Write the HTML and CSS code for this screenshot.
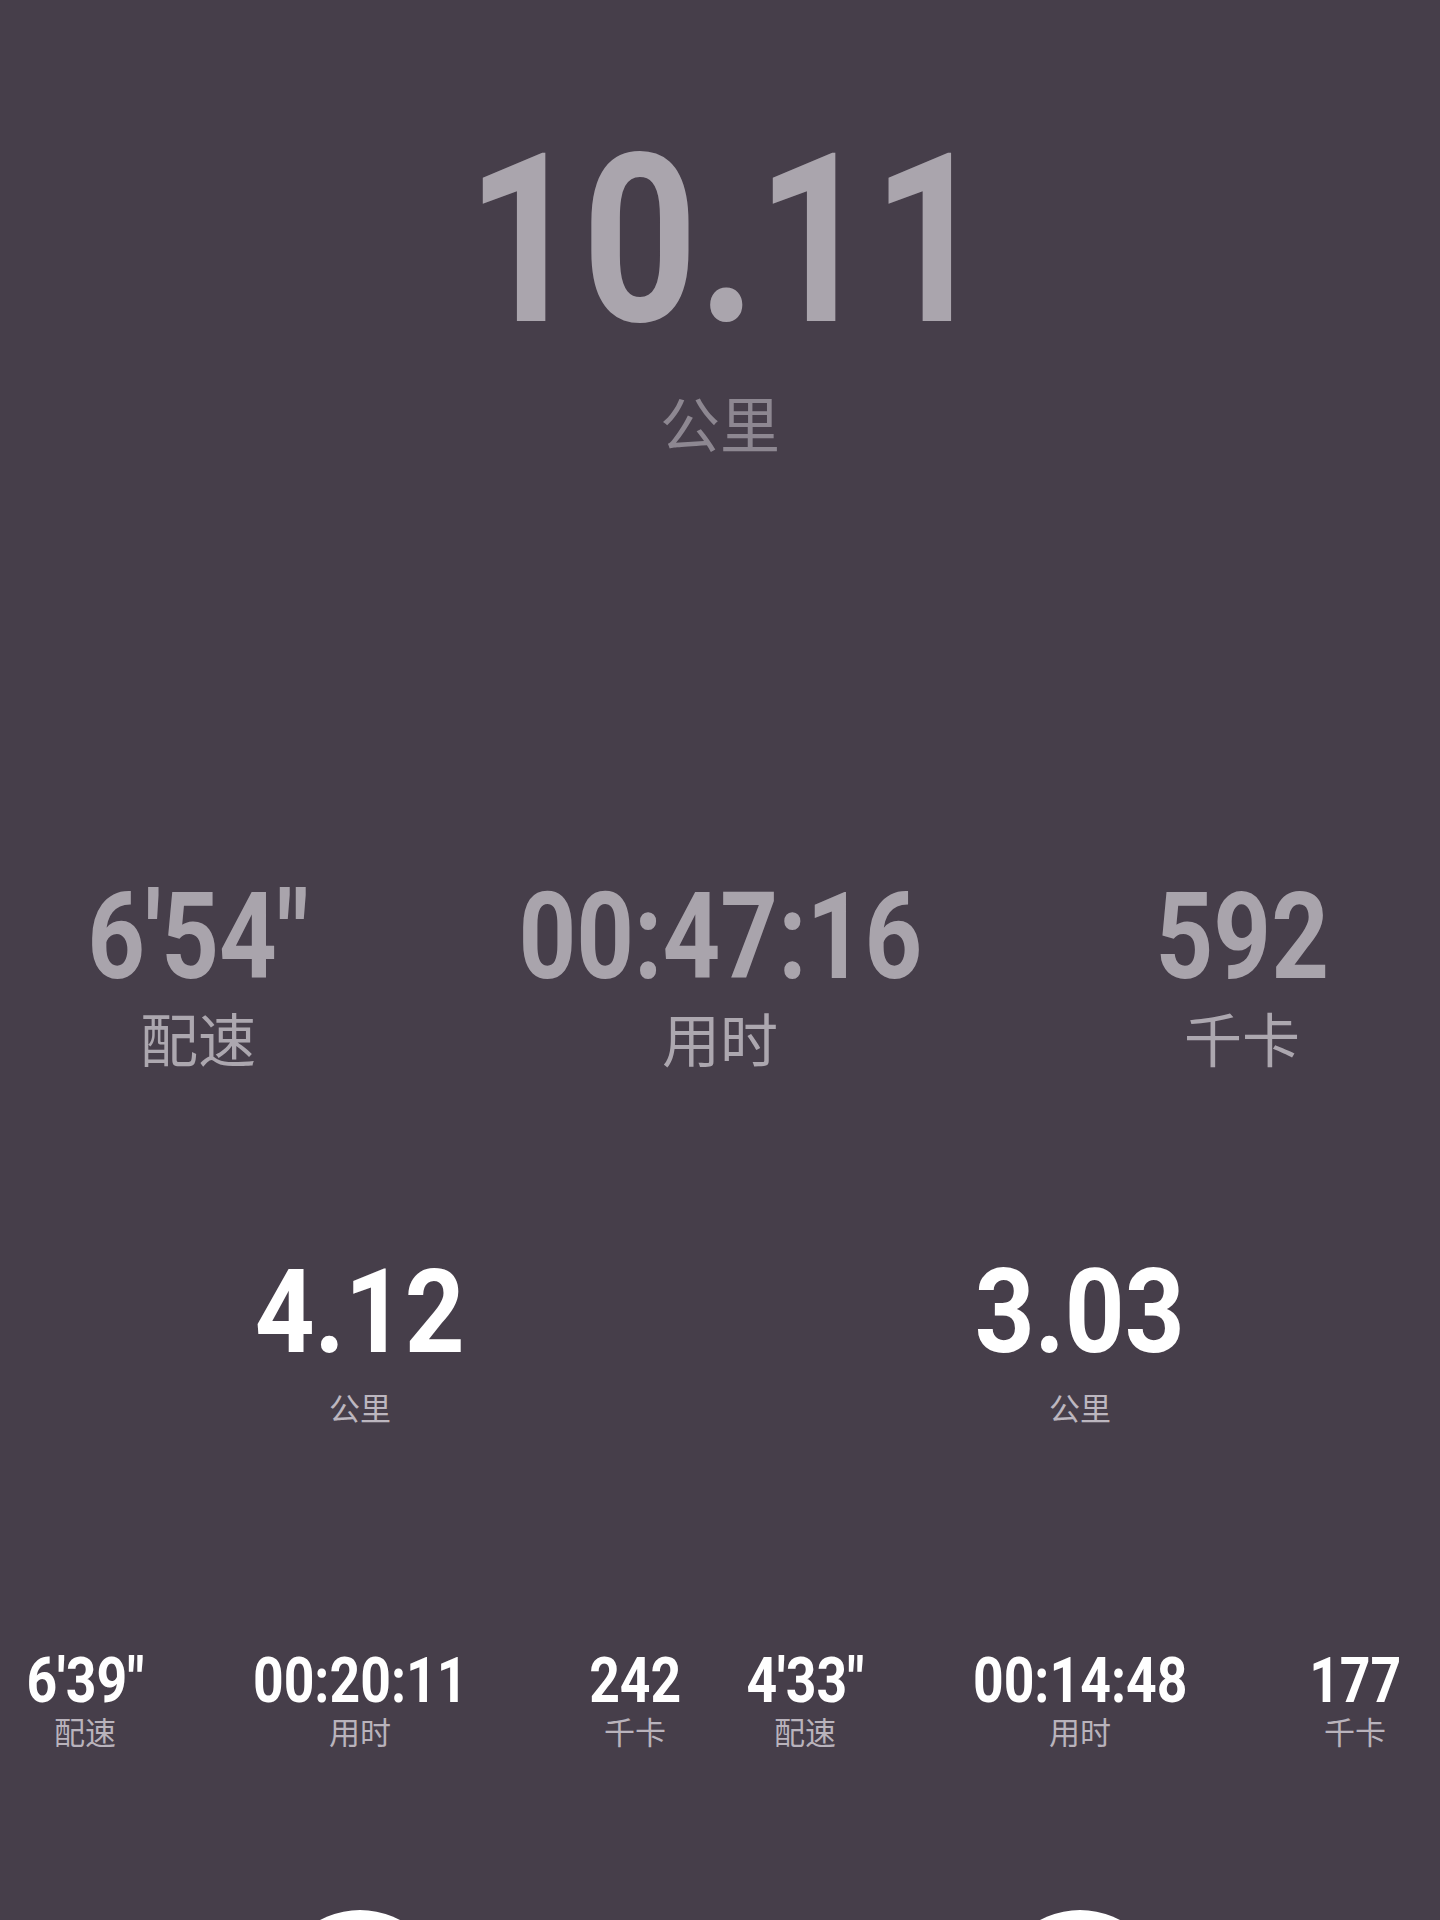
FILE: index.html
```html
<!DOCTYPE html>
<html lang="zh-CN">
<head>
<meta charset="utf-8">
<title>跑步记录</title>
<link rel="stylesheet" href="styles.css">
</head>
<body>
<div class="screen">
  <section class="hero">
    <div class="hero-value"><span class="num">10.11</span></div>
    <div class="hero-unit">公里</div>
  </section>

  <section class="summary">
    <div class="stat">
      <div class="stat-value"><span class="num">6'54"</span></div>
      <div class="stat-label">配速</div>
    </div>
    <div class="stat">
      <div class="stat-value"><span class="num">00:47:16</span></div>
      <div class="stat-label">用时</div>
    </div>
    <div class="stat">
      <div class="stat-value"><span class="num">592</span></div>
      <div class="stat-label">千卡</div>
    </div>
  </section>

  <section class="splits">
    <div class="split">
      <div class="split-dist">
        <div class="split-value"><span class="num">4.12</span></div>
        <div class="split-unit">公里</div>
      </div>
      <div class="split-stats">
        <div class="mini">
          <div class="mini-value"><span class="num">6'39"</span></div>
          <div class="mini-label">配速</div>
        </div>
        <div class="mini">
          <div class="mini-value"><span class="num">00:20:11</span></div>
          <div class="mini-label">用时</div>
        </div>
        <div class="mini">
          <div class="mini-value"><span class="num">242</span></div>
          <div class="mini-label">千卡</div>
        </div>
      </div>
      <div class="dot"></div>
    </div>

    <div class="split">
      <div class="split-dist">
        <div class="split-value"><span class="num">3.03</span></div>
        <div class="split-unit">公里</div>
      </div>
      <div class="split-stats">
        <div class="mini">
          <div class="mini-value"><span class="num">4'33"</span></div>
          <div class="mini-label">配速</div>
        </div>
        <div class="mini">
          <div class="mini-value"><span class="num">00:14:48</span></div>
          <div class="mini-label">用时</div>
        </div>
        <div class="mini">
          <div class="mini-value"><span class="num">177</span></div>
          <div class="mini-label">千卡</div>
        </div>
      </div>
      <div class="dot"></div>
    </div>
  </section>
</div>
</body>
</html>
```

FILE: styles.css
```css
html, body {
  margin: 0;
  padding: 0;
  background: #463e4a;
}

.screen {
  width: 1440px;
  height: 1920px;
  overflow: hidden;
  background: #463e4a;
  padding-top: 123px;
  box-sizing: border-box;
  font-family: Roboto, "DejaVu Sans", sans-serif;
}

.num {
  display: inline-block;
  font-family: Roboto, "DejaVu Sans", sans-serif;
  font-weight: 700;
  transform: scaleX(0.84);
  transform-origin: center;
  white-space: nowrap;
}

.hero {
  display: flex;
  flex-direction: column;
  align-items: center;
}

.hero-value {
  display: flex;
  justify-content: center;
  padding-left: 14px;
  font-size: 236px;
  line-height: 1;
  color: #aaa5ad;
}

.hero-value .num {
  transform: scaleX(0.855);
}

.hero-unit {
  margin-top: 33px;
  font-family: "Noto Sans CJK SC", sans-serif;
  font-size: 60px;
  line-height: 1;
  color: #8d8791;
}

.summary {
  margin-top: 425px;
  display: grid;
  grid-template-columns: repeat(3, 396px);
  column-gap: 126px;
  justify-content: center;
}

.stat {
  display: flex;
  flex-direction: column;
  align-items: center;
}

.stat-value {
  display: flex;
  justify-content: center;
  font-size: 120px;
  line-height: 1;
  color: #a9a4ac;
}

.stat-label {
  margin-top: 11px;
  font-family: "Noto Sans CJK SC", sans-serif;
  font-size: 58px;
  line-height: 1;
  color: #aca7af;
}

.splits {
  margin-top: 188px;
  display: grid;
  grid-template-columns: 720px 720px;
}

.split {
  display: flex;
  flex-direction: column;
  align-items: center;
}

.split-dist {
  display: flex;
  flex-direction: column;
  align-items: center;
}

.split-value {
  display: flex;
  justify-content: center;
  font-size: 116px;
  line-height: 1;
  color: #ffffff;
}

.split-value .num {
  transform: scaleX(0.9);
}

.split-unit {
  margin-top: 21px;
  font-family: "Noto Sans CJK SC", sans-serif;
  font-size: 31px;
  line-height: 1;
  color: #bcb6bf;
}

.split-stats {
  margin-top: 227px;
  width: 720px;
  display: grid;
  grid-template-columns: repeat(3, 170px);
  column-gap: 105px;
  justify-content: center;
}

.mini {
  display: flex;
  flex-direction: column;
  align-items: center;
}

.mini-value {
  display: flex;
  justify-content: center;
  font-size: 63px;
  line-height: 1;
  color: #ffffff;
}

.mini-value .num {
  transform: scaleX(0.85);
}

.mini-label {
  margin-top: 3px;
  font-family: "Noto Sans CJK SC", sans-serif;
  font-size: 31px;
  line-height: 1;
  color: #b9b3bc;
}

.dot {
  margin-top: 164px;
  width: 170px;
  height: 170px;
  border-radius: 50%;
  background: #ffffff;
  flex-shrink: 0;
}
```
